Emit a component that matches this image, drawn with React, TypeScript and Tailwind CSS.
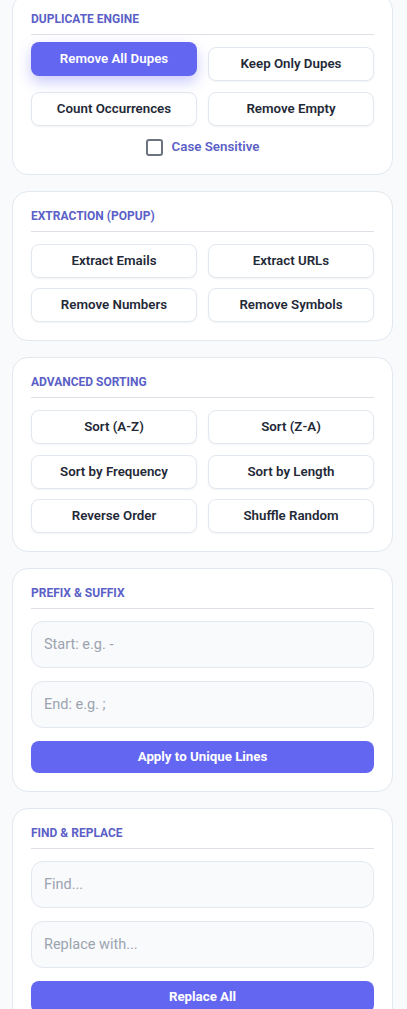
import React from "react";

const font = { fontFamily: "Roboto, 'Noto Sans', sans-serif" };

function Card({ title, children }: { title: string; children: React.ReactNode }) {
  return (
    <div className="bg-white border border-[#e2e8f0] rounded-2xl px-[18px] pt-4 pb-[18px]">
      <div className="text-[12px] leading-4 font-bold text-[#5b5fc7] pb-[7px] border-b border-[#dde1e7] mb-3">
        {title}
      </div>
      {children}
    </div>
  );
}

function Btn({ label, active }: { label: string; active?: boolean }) {
  if (active) {
    return (
      <button className="h-[34px] rounded-lg bg-[#6366f1] text-white text-[13.3px] font-semibold -translate-y-[5px] shadow-[0_6px_14px_rgba(99,102,241,0.35)]">
        {label}
      </button>
    );
  }
  return (
    <button className="h-[34px] rounded-lg bg-white border border-[#e2e8f0] text-[13.3px] font-semibold text-[#1f2937] shadow-[0_1px_2px_rgba(0,0,0,0.05)]">
      {label}
    </button>
  );
}

function Grid({ items, active }: { items: string[]; active?: string }) {
  return (
    <div className="grid grid-cols-2 gap-x-[11px] gap-y-[10.5px]">
      {items.map((i) => (
        <Btn key={i} label={i} active={i === active} />
      ))}
    </div>
  );
}

function Field({ placeholder }: { placeholder: string }) {
  return (
    <input
      placeholder={placeholder}
      className="w-full h-[47px] rounded-xl bg-[#f8fafc] border border-[#e2e8f0] px-3 text-[14.5px] text-[#1f2937] placeholder:text-[#9ca3af] outline-none"
    />
  );
}

function Primary({ label }: { label: string }) {
  return (
    <button className="w-full h-[32px] rounded-lg bg-[#6366f1] text-white text-[13.3px] font-bold">
      {label}
    </button>
  );
}

export default function App() {
  return (
    <div className="min-h-screen bg-[#f8fafc] pl-3 pr-[14px] overflow-hidden" style={font}>
      <div className="flex flex-col gap-4 -mt-[6px] pb-8">
        <Card title="DUPLICATE ENGINE">
          <Grid
            items={["Remove All Dupes", "Keep Only Dupes", "Count Occurrences", "Remove Empty"]}
            active="Remove All Dupes"
          />
          <label className="flex items-center justify-center gap-[9px] mt-[13px] h-[17px]">
            <span className="w-[17px] h-[17px] border-2 border-[#6b7280] rounded-[3px] bg-white" />
            <span className="text-[13.3px] font-semibold text-[#5b5fc7]">Case Sensitive</span>
          </label>
        </Card>

        <Card title="EXTRACTION (POPUP)">
          <Grid items={["Extract Emails", "Extract URLs", "Remove Numbers", "Remove Symbols"]} />
        </Card>

        <Card title="ADVANCED SORTING">
          <Grid
            items={[
              "Sort (A-Z)",
              "Sort (Z-A)",
              "Sort by Frequency",
              "Sort by Length",
              "Reverse Order",
              "Shuffle Random",
            ]}
          />
        </Card>

        <Card title="PREFIX & SUFFIX">
          <div className="flex flex-col gap-[13px]">
            <Field placeholder="Start: e.g. -" />
            <Field placeholder="End: e.g. ;" />
            <Primary label="Apply to Unique Lines" />
          </div>
        </Card>

        <Card title="FIND & REPLACE">
          <div className="flex flex-col gap-[13px]">
            <Field placeholder="Find..." />
            <Field placeholder="Replace with..." />
            <Primary label="Replace All" />
          </div>
        </Card>
      </div>
    </div>
  );
}
